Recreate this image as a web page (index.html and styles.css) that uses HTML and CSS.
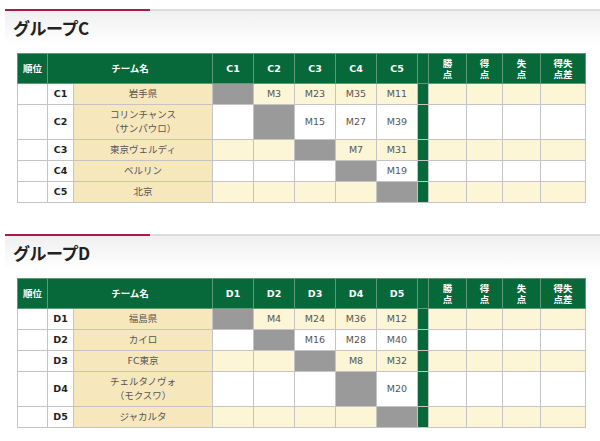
FILE: index.html
```
<!DOCTYPE html>
<html>
	<head>
		<meta charset="utf-8">
		<link rel="stylesheet" href="styles.css">
	</head>
	<body>
		<div class="group">
			<div class="rule"><span class="accent"></span><span class="line"></span></div>
			<h2 class="ghead">グループC</h2>
			<table class="league">
				<colgroup>
					<col class="w-rank"><col class="w-code"><col class="w-name">
					<col class="w-m"><col class="w-m"><col class="w-m"><col class="w-m"><col class="w-m">
					<col class="w-sep"><col class="w-s1"><col class="w-s2"><col class="w-s3"><col class="w-s4">
				</colgroup>
				<tr class="hrow">
					<th>順位</th><th colspan="2">チーム名</th>
					<th>C1</th><th>C2</th><th>C3</th><th>C4</th><th>C5</th>
					<th class="sep"></th>
					<th>勝<br>点</th><th>得<br>点</th><th>失<br>点</th><th>得失<br>点差</th>
				</tr>
				<tr class="odd">
					<td class="rank"></td><td class="code">C1</td><td class="name">岩手県</td>
					<td class="x"></td><td>M3</td><td>M23</td><td>M35</td><td>M11</td>
					<td class="sep"></td><td></td><td></td><td></td><td></td>
				</tr>
				<tr>
					<td class="rank"></td><td class="code">C2</td><td class="name">コリンチャンス<br>（サンパウロ）</td>
					<td></td><td class="x"></td><td>M15</td><td>M27</td><td>M39</td>
					<td class="sep"></td><td></td><td></td><td></td><td></td>
				</tr>
				<tr class="odd">
					<td class="rank"></td><td class="code">C3</td><td class="name">東京ヴェルディ</td>
					<td></td><td></td><td class="x"></td><td>M7</td><td>M31</td>
					<td class="sep"></td><td></td><td></td><td></td><td></td>
				</tr>
				<tr>
					<td class="rank"></td><td class="code">C4</td><td class="name">ベルリン</td>
					<td></td><td></td><td></td><td class="x"></td><td>M19</td>
					<td class="sep"></td><td></td><td></td><td></td><td></td>
				</tr>
				<tr class="odd">
					<td class="rank"></td><td class="code">C5</td><td class="name">北京</td>
					<td></td><td></td><td></td><td></td><td class="x"></td>
					<td class="sep"></td><td></td><td></td><td></td><td></td>
				</tr>
			</table>
		</div>
		<div class="group">
			<div class="rule"><span class="accent"></span><span class="line"></span></div>
			<h2 class="ghead">グループD</h2>
			<table class="league">
				<colgroup>
					<col class="w-rank"><col class="w-code"><col class="w-name">
					<col class="w-m"><col class="w-m"><col class="w-m"><col class="w-m"><col class="w-m">
					<col class="w-sep"><col class="w-s1"><col class="w-s2"><col class="w-s3"><col class="w-s4">
				</colgroup>
				<tr class="hrow">
					<th>順位</th><th colspan="2">チーム名</th>
					<th>D1</th><th>D2</th><th>D3</th><th>D4</th><th>D5</th>
					<th class="sep"></th>
					<th>勝<br>点</th><th>得<br>点</th><th>失<br>点</th><th>得失<br>点差</th>
				</tr>
				<tr class="odd">
					<td class="rank"></td><td class="code">D1</td><td class="name">福島県</td>
					<td class="x"></td><td>M4</td><td>M24</td><td>M36</td><td>M12</td>
					<td class="sep"></td><td></td><td></td><td></td><td></td>
				</tr>
				<tr>
					<td class="rank"></td><td class="code">D2</td><td class="name">カイロ</td>
					<td></td><td class="x"></td><td>M16</td><td>M28</td><td>M40</td>
					<td class="sep"></td><td></td><td></td><td></td><td></td>
				</tr>
				<tr class="odd">
					<td class="rank"></td><td class="code">D3</td><td class="name">FC東京</td>
					<td></td><td></td><td class="x"></td><td>M8</td><td>M32</td>
					<td class="sep"></td><td></td><td></td><td></td><td></td>
				</tr>
				<tr>
					<td class="rank"></td><td class="code">D4</td><td class="name">チェルタノヴォ<br>（モクスワ）</td>
					<td></td><td></td><td></td><td class="x"></td><td>M20</td>
					<td class="sep"></td><td></td><td></td><td></td><td></td>
				</tr>
				<tr class="odd">
					<td class="rank"></td><td class="code">D5</td><td class="name">ジャカルタ</td>
					<td></td><td></td><td></td><td></td><td class="x"></td>
					<td class="sep"></td><td></td><td></td><td></td><td></td>
				</tr>
			</table>
		</div>
	</body>
</html>
```

FILE: styles.css
```
body {
	margin: 0; padding: 9px 0 0 5px; background: #fff;
	font-family: "DejaVu Sans", "Noto Sans CJK JP", sans-serif; color: #333;
}
.group {
	margin-bottom: 31px;
}
.rule {
	display: flex; height: 2px;
}
.accent {
	width: 145px; background: #a8194c;
}
.line {
	flex: 1; background: #dcdcdc;
}
.ghead {
	margin: 0; padding: 6px 8px; line-height: 22px; font-size: 17px; font-weight: bold; color: #222;
	font-family: "Noto Sans CJK JP", sans-serif; letter-spacing: -0.5px;
	background: linear-gradient(#f0f0f0, #fff);
}
.league {
	margin: 8px 0 0 12px; border-collapse: collapse; table-layout: fixed; width: 568px;
	font-size: 9.5px;
}
.w-rank { width: 30px; }
.w-code { width: 26px; }
.w-name { width: 139px; }
.w-m { width: 41px; }
.w-sep { width: 11px; }
.w-s1 { width: 38px; }
.w-s2 { width: 36px; }
.w-s3 { width: 38px; }
.w-s4 { width: 45px; }
.league th {
	background: #07683a; color: #fff; font-weight: bold; height: 29px; padding: 0;
	border: 1px solid #5f9a78; line-height: 11px; font-size: 9.5px;
}
.league td {
	border: 1px solid #c4c4c4; text-align: center; padding: 3px 0; line-height: 14px;
	height: 14px; color: #555;
}
.league tr.odd td {
	background: #fdf6d6;
}
.league td.rank, .league tr.odd td.rank, .league td.code, .league tr.odd td.code {
	background: #fff;
}
.league td.code {
	font-weight: bold; color: #222;
}
.league td.name, .league tr.odd td.name {
	background: #f6e7bd;
}
.league td.x, .league tr.odd td.x {
	background: #9a9a9a;
}
.league td.sep, .league tr.odd td.sep, .league th.sep {
	background: #07683a;
}
```
